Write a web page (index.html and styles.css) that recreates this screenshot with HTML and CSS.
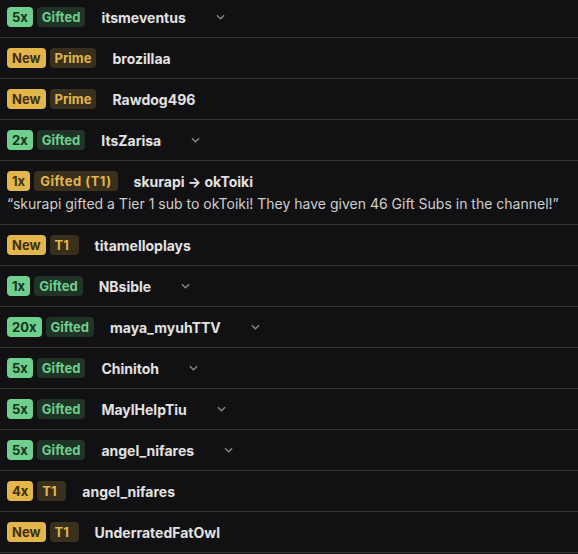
FILE: index.html
```html
<!DOCTYPE html>
<html>
<head>
<meta charset="utf-8">
<link rel="stylesheet" href="styles.css">
</head>
<body>
<div class="list">
  <div class="row"><div class="line"><span class="b b-green">5x</span><span class="b b-green-soft">Gifted</span><span class="name">itsmeventus</span><svg class="chev" viewBox="0 0 10 6"><path d="M1 1l4 4 4-4"/></svg></div></div>
  <div class="row"><div class="line"><span class="b b-gold">New</span><span class="b b-gold-soft">Prime</span><span class="name">brozillaa</span></div></div>
  <div class="row"><div class="line"><span class="b b-gold">New</span><span class="b b-gold-soft">Prime</span><span class="name">Rawdog496</span></div></div>
  <div class="row"><div class="line"><span class="b b-green">2x</span><span class="b b-green-soft">Gifted</span><span class="name">ItsZarisa</span><svg class="chev" viewBox="0 0 10 6"><path d="M1 1l4 4 4-4"/></svg></div></div>
  <div class="row"><div class="line"><span class="b b-gold">1x</span><span class="b b-gold-soft wide">Gifted (T1)</span><span class="name">skurapi → okToiki</span></div><div class="msg">“skurapi gifted a Tier 1 sub to okToiki! They have given 46 Gift Subs in the channel!”</div></div>
  <div class="row"><div class="line"><span class="b b-gold">New</span><span class="b b-gold-soft tier">T1</span><span class="name">titamelloplays</span></div></div>
  <div class="row"><div class="line"><span class="b b-green">1x</span><span class="b b-green-soft">Gifted</span><span class="name">NBsible</span><svg class="chev" viewBox="0 0 10 6"><path d="M1 1l4 4 4-4"/></svg></div></div>
  <div class="row"><div class="line"><span class="b b-green">20x</span><span class="b b-green-soft">Gifted</span><span class="name">maya_myuhTTV</span><svg class="chev" viewBox="0 0 10 6"><path d="M1 1l4 4 4-4"/></svg></div></div>
  <div class="row"><div class="line"><span class="b b-green">5x</span><span class="b b-green-soft">Gifted</span><span class="name">Chinitoh</span><svg class="chev" viewBox="0 0 10 6"><path d="M1 1l4 4 4-4"/></svg></div></div>
  <div class="row"><div class="line"><span class="b b-green">5x</span><span class="b b-green-soft">Gifted</span><span class="name">MaylHelpTiu</span><svg class="chev" viewBox="0 0 10 6"><path d="M1 1l4 4 4-4"/></svg></div></div>
  <div class="row"><div class="line"><span class="b b-green">5x</span><span class="b b-green-soft">Gifted</span><span class="name">angel_nifares</span><svg class="chev" viewBox="0 0 10 6"><path d="M1 1l4 4 4-4"/></svg></div></div>
  <div class="row"><div class="line"><span class="b b-gold">4x</span><span class="b b-gold-soft tier">T1</span><span class="name">angel_nifares</span></div></div>
  <div class="row"><div class="line"><span class="b b-gold">New</span><span class="b b-gold-soft tier">T1</span><span class="name">UnderratedFatOwl</span></div></div>
</div>
</body>
</html>
```

FILE: styles.css
```css
html, body {
  margin: 0;
  padding: 0;
  background: #111113;
}
body {
  font-family: Inter, "Noto Sans", sans-serif;
  font-size: 14px;
  color: #e0e0e0;
  overflow: hidden;
}
.list {
  margin-top: -3px;
}
.row {
  padding: 10px 7px;
  border-bottom: 1px solid #323234;
}
.line {
  display: flex;
  align-items: center;
  height: 20px;
}
.b {
  display: inline-flex;
  align-items: center;
  height: 20px;
  padding: 0 5px;
  border-radius: 4px;
  font-weight: 700;
  font-size: 13px;
  margin-right: 4px;
  box-sizing: border-box;
}
.b-green { background: #6fcf8c; color: #17331f; }
.b-green-soft { background: #1f3327; color: #6fcf8c; }
.b-gold { background: #e3b64c; color: #3f3010; }
.b-gold-soft { background: #392f1d; color: #e3b64c; }
.tier { min-width: 29px; }
.wide { padding: 0 6px; letter-spacing: 0.5px; }
.name {
  margin-left: 12px;
  font-weight: 700;
  font-size: 14px;
  color: #e2e2e2;
}
.chev {
  width: 9px;
  height: 6px;
  margin-left: 30px;
  fill: none;
  stroke: #8a8a8c;
  stroke-width: 1.4;
}
.msg {
  margin-top: 3px;
  line-height: 20px;
  color: #cfcfcf;
  white-space: nowrap;
}
```
